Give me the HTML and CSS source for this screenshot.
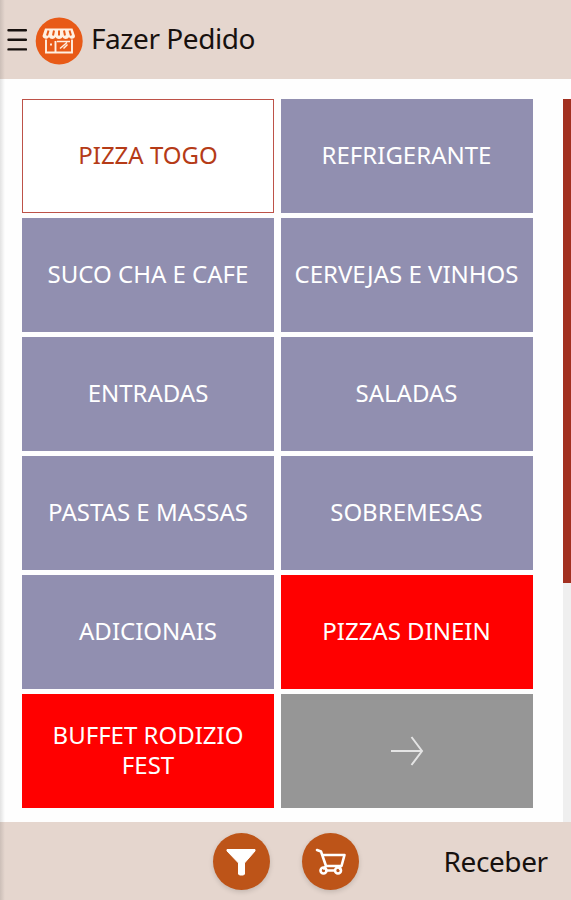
FILE: index.html
```html
<!DOCTYPE html>
<html lang="pt">
<head>
<meta charset="utf-8">
<title>Fazer Pedido</title>
<link rel="stylesheet" href="styles.css">
</head>
<body>
<div class="app">
  <header class="topbar">
    <svg class="menu" width="20" height="24" viewBox="0 0 20 24"><path d="M1.500 2.200H19M1.500 11.800H19M1.500 21.400H19" stroke="#17110e" stroke-width="2.400" stroke-linecap="round"/></svg>
    <svg class="logo" width="48" height="48" viewBox="0 0 48 48" fill="none" stroke="#fff0e2">
      <circle cx="24.200" cy="24" r="23.500" fill="#e85a17" stroke="none"/>
      <path d="M10 11.500H37.500L40 19C40 22.500 35 22.500 34 20C33 22.500 28.500 22.500 27.500 20C26.500 22.500 21.500 22.500 20.500 20C19.500 22.500 15 22.500 14 20C13 22.500 8 22.500 7.500 19Z" fill="#fff0e2" stroke="none"/>
      <path d="M13.500 13.500L12 18.500M19 13.500L18 18.500M24 13.500V18.500M29 13.500L30 18.500M34.500 13.500L36 18.500" stroke="#e85a17" stroke-width="2"/>
      <path d="M11 22.500V35.500H37V22.500M20.500 24V35M16 26.500V28.500" stroke-width="1.900"/>
      <path d="M22 24.500H35M25 31.500L32 25.500M28.500 31.500L32.500 27.500" stroke-width="1.500"/>
    </svg>
    <h1 class="title">Fazer Pedido</h1>
  </header>
  <main class="content">
    <div class="grid">
      <button class="tile selected">PIZZA TOGO</button>
      <button class="tile">REFRIGERANTE</button>
      <button class="tile">SUCO CHA E CAFE</button>
      <button class="tile">CERVEJAS E VINHOS</button>
      <button class="tile">ENTRADAS</button>
      <button class="tile">SALADAS</button>
      <button class="tile">PASTAS E MASSAS</button>
      <button class="tile">SOBREMESAS</button>
      <button class="tile">ADICIONAIS</button>
      <button class="tile red">PIZZAS DINEIN</button>
      <button class="tile red">BUFFET RODIZIO<br>FEST</button>
      <button class="tile next" aria-label="next"><svg width="34" height="30" viewBox="0 0 34 30" fill="none" stroke="#e4e4e4" stroke-width="2"><path d="M1 15H32M21.500 1L32 15L21.500 29"/></svg></button>
    </div>
    <div class="scroll"><div class="thumb"></div></div>
  </main>
  <footer class="bottombar">
    <button class="round"><svg width="57" height="57" viewBox="0 0 57 57"><path d="M14 16.500H42V18L31.500 30V41L30.500 42H26.500L25.500 41V30L14 18Z" fill="#fff" stroke="#fff" stroke-linejoin="round"/></svg></button>
    <button class="round"><svg width="57" height="57" viewBox="0 0 57 57" fill="none" stroke="#fff" stroke-width="2.600" stroke-linecap="round" stroke-linejoin="round"><path d="M15 17L19 18.500L24 33H39.500L42.500 22H20.500M24 33L22 35.500M24.500 37.500H32.500M38 33V36"/><circle cx="21.500" cy="37.500" r="3"/><circle cx="36" cy="37.500" r="3"/></svg></button>
    <span class="receive">Receber</span>
  </footer>
  <div class="edge"></div>
</div>
</body>
</html>
```
FILE: styles.css
```css
* { box-sizing: border-box; }
body { margin: 0; font-family: "Noto Sans", sans-serif; background: #fefefe; }
button { font: inherit; border: 0; padding: 0; }
svg { display: block; }
.app { position: relative; width: 571px; height: 900px; display: flex; flex-direction: column; overflow: hidden; }
.topbar { height: 79px; background: #e5d6ce; display: flex; align-items: flex-start; padding: 17px 0 0 7px; }
.menu { margin-top: 11px; }
.logo { margin-left: 8px; }
.title { margin: 1px 0 0 8px; font-size: 28px; line-height: 40px; font-weight: 400; letter-spacing: -0.45px; color: #17110e; white-space: nowrap; }
.content { height: 743px; display: flex; justify-content: space-between; padding: 20px 0 0 22px; }
.grid { display: grid; grid-template-columns: 252px 252px; grid-auto-rows: 114px; gap: 5px 6.500px; align-content: start; }
.tile { background: #918fb0; color: #fff; font-size: 24px; line-height: 30px; display: flex; align-items: center; justify-content: center; text-align: center; white-space: nowrap; padding-bottom: 2px; }
.selected { background: #fff; color: #b53b17; border: 1px solid #bd5248; }
.red { background: #f00; }
.next { background: #969696; padding-bottom: 0; }
.scroll { width: 8px; background: #efefef; }
.thumb { height: 484px; background: #a23020; }
.bottombar { height: 78px; background: #e5d6ce; display: flex; align-items: flex-start; padding: 11px 0 0 212.500px; }
.round { width: 57px; height: 57px; border-radius: 50%; background: #bd5418; margin-right: 32px; box-shadow: 0 2px 5px #00000026; }
.receive { margin: 8px 0 0 53px; font-size: 28px; line-height: 40px; letter-spacing: -0.4px; color: #17110e; }
.edge { position: absolute; left: 0; top: 0; width: 5px; height: 100%; background: linear-gradient(90deg, #0000001c, #0000); }
```
